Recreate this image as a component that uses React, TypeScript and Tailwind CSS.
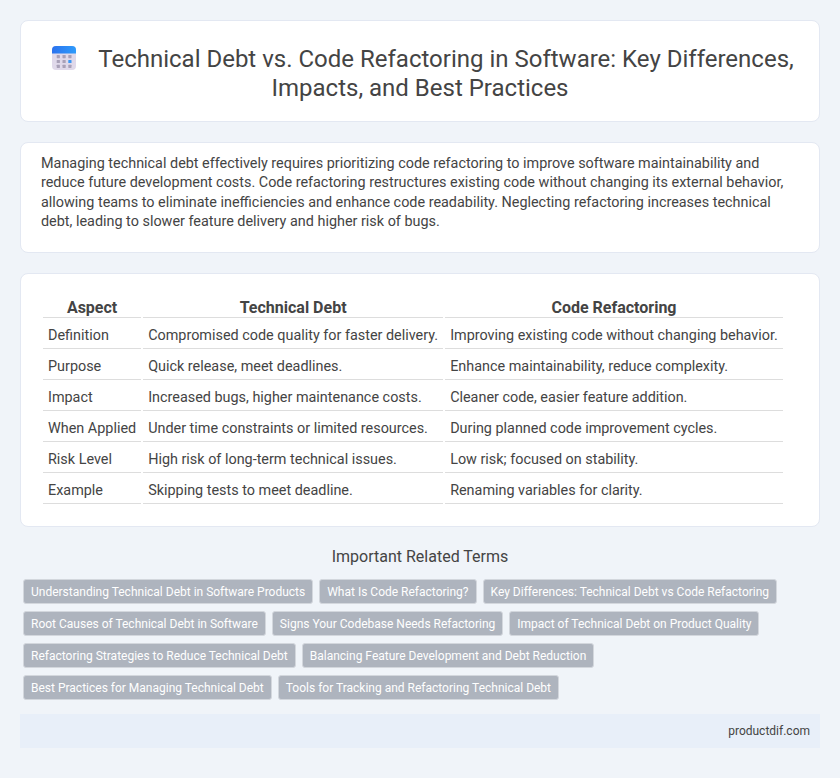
import React from "react";

const rows = [
  ["Definition", "Compromised code quality for faster delivery.", "Improving existing code without changing behavior."],
  ["Purpose", "Quick release, meet deadlines.", "Enhance maintainability, reduce complexity."],
  ["Impact", "Increased bugs, higher maintenance costs.", "Cleaner code, easier feature addition."],
  ["When Applied", "Under time constraints or limited resources.", "During planned code improvement cycles."],
  ["Risk Level", "High risk of long-term technical issues.", "Low risk; focused on stability."],
  ["Example", "Skipping tests to meet deadline.", "Renaming variables for clarity."],
];

const terms = [
  "Understanding Technical Debt in Software Products",
  "What Is Code Refactoring?",
  "Key Differences: Technical Debt vs Code Refactoring",
  "Root Causes of Technical Debt in Software",
  "Signs Your Codebase Needs Refactoring",
  "Impact of Technical Debt on Product Quality",
  "Refactoring Strategies to Reduce Technical Debt",
  "Balancing Feature Development and Debt Reduction",
  "Best Practices for Managing Technical Debt",
  "Tools for Tracking and Refactoring Technical Debt",
];

function CalendarIcon() {
  const dots = [];
  for (let r = 0; r < 3; r++) {
    for (let c = 0; c < 3; c++) {
      dots.push(
        <rect
          key={`${r}-${c}`}
          x={4.7 + c * 5.8}
          y={9 + r * 4.9}
          width="3.2"
          height="3.2"
          rx="0.4"
          fill={r === 1 && c === 2 ? "#3b97f5" : "#a9a1b8"}
        />,
      );
    }
  }
  return (
    <svg width="24" height="24" viewBox="0 0 24 24" className="mt-px mr-[22px] ml-[6px] inline-block align-top">
      <defs>
        <linearGradient id="calTop" x1="0" y1="0" x2="1" y2="0">
          <stop offset="0" stopColor="#2b72ee" />
          <stop offset="1" stopColor="#2e9bfb" />
        </linearGradient>
      </defs>
      <rect x="0" y="0" width="24" height="24" rx="4" fill="#e0d9ea" />
      <path d="M0 7.5V4a4 4 0 0 1 4-4h16a4 4 0 0 1 4 4v3.5z" fill="url(#calTop)" />
      {dots}
    </svg>
  );
}

export default function App() {
  return (
    <div className="min-h-[778px] bg-[#f0f4f9] p-5 font-['Roboto',sans-serif] text-[#444]">
      <div className="h-[102px] rounded-lg border border-[#e3e8f2] bg-white px-5 pt-[24px]">
        <h1 className="text-center text-2xl leading-[29px] font-normal text-[#444]">
          <CalendarIcon />
          Technical Debt vs. Code Refactoring in Software: Key Differences,
          <br />
          Impacts, and Best Practices
        </h1>
      </div>

      <div className="mt-5 h-[111px] rounded-lg border border-[#e3e8f2] bg-white px-5 pt-[11px] text-[14.4px] leading-[19.4px] text-[#444]">
        Managing technical debt effectively requires prioritizing code refactoring to improve software maintainability and
        reduce future development costs. Code refactoring restructures existing code without changing its external behavior,
        allowing teams to eliminate inefficiencies and enhance code readability. Neglecting refactoring increases technical
        debt, leading to slower feature delivery and higher risk of bugs.
      </div>

      <div className="mt-5 h-[254px] rounded-lg border border-[#e3e8f2] bg-white px-5 pt-[20px]">
        <table className="border-separate border-spacing-[2px] text-[14.4px]">
          <thead>
            <tr>
              <th className="h-[22px] border-b border-[#ddd] px-[5px] pt-[2px] text-center align-top text-base leading-[19px] font-bold">Aspect</th>
              <th className="border-b border-[#ddd] px-[5px] pt-[2px] text-center align-top text-base leading-[19px] font-bold">Technical Debt</th>
              <th className="border-b border-[#ddd] px-[5px] pt-[2px] text-center align-top text-base leading-[19px] font-bold">Code Refactoring</th>
            </tr>
          </thead>
          <tbody>
            {rows.map((row) => (
              <tr key={row[0]}>
                {row.map((cell) => (
                  <td key={cell} className="h-[29px] border-b border-[#ddd] px-[5px] pt-[3px] whitespace-nowrap">
                    {cell}
                  </td>
                ))}
              </tr>
            ))}
          </tbody>
        </table>
      </div>

      <h2 className="mt-[20px] text-center text-base leading-[19px] font-normal text-[#444]">Important Related Terms</h2>

      <div className="mt-[13px] flex flex-wrap gap-x-[6px] gap-y-[7px] px-[3px]">
        {terms.map((term) => (
          <span
            key={term}
            className="rounded-[3px] border border-[#d3d7dd] bg-[#aeb4be] px-[7px] pt-[5px] pb-[3px] text-xs leading-[15px] font-normal text-white"
          >
            {term}
          </span>
        ))}
      </div>

      <div className="mt-[14px] flex h-[34px] items-center justify-end bg-[#e8eff9] px-2.5 text-xs text-[#444]">
        productdif.com
      </div>
    </div>
  );
}
